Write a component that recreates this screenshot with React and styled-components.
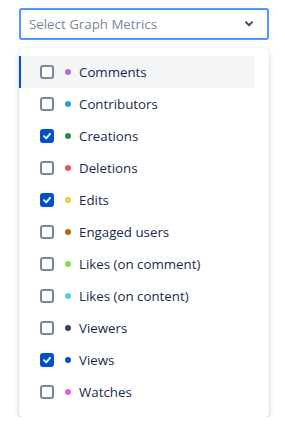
import React, { useState } from "react";
import styled, { createGlobalStyle, css } from "styled-components";

const Global = createGlobalStyle`
  html, body { margin: 0; padding: 0; background: #fff; }
  body { font-family: "Segoe UI", "Open Sans", "Noto Sans", sans-serif; }
  * { box-sizing: border-box; }
`;

const Page = styled.div`
  padding: 8px 16px 0 19px;
  width: 285px;
`;

const Select = styled.div`
  width: 250px;
  height: 32px;
  border: 2px solid #4c9aff;
  border-radius: 3px;
  background: #fff;
  display: flex;
  align-items: center;
  padding: 0 14px 0 8px;
  justify-content: space-between;
`;

const Placeholder = styled.span`
  font-size: 13.3px;
  color: #7a869a;
  line-height: 20px;
`;

const Menu = styled.div`
  margin-top: 8px;
  width: 250px;
  background: #fff;
  border-radius: 4px;
  box-shadow: 0 4px 8px -2px rgba(9, 30, 66, 0.25), 0 0 1px rgba(9, 30, 66, 0.31);
  padding: 8px 15px 9px 0;
`;

const Row = styled.div`
  height: 32px;
  display: flex;
  align-items: center;
  padding-left: 21px;
  position: relative;
  ${(p) =>
    p.$active &&
    css`
      background: #f4f5f7;
      &::before {
        content: "";
        position: absolute;
        left: 0;
        top: 0;
        bottom: 0;
        width: 2px;
        background: #0052cc;
      }
    `}
`;

const Box = styled.span`
  width: 14px;
  height: 14px;
  border-radius: 3px;
  flex: none;
  display: flex;
  align-items: center;
  justify-content: center;
  ${(p) =>
    p.$checked
      ? css`
          background: #0052cc;
        `
      : css`
          border: 2px solid #7a869a;
          background: #fff;
        `}
`;

const Dot = styled.span`
  width: 6px;
  height: 6px;
  border-radius: 50%;
  background: ${(p) => p.$color};
  margin-left: 11px;
  flex: none;
`;

const Label = styled.span`
  margin-left: 8px;
  font-size: 13.3px;
  color: #172b4d;
  line-height: 20px;
  white-space: nowrap;
`;

const Check = () => (
  <svg width="10" height="10" viewBox="0 0 10 10">
    <path d="M2 5.2 L4.2 7.3 L8 2.8" fill="none" stroke="#fff" strokeWidth="1.8" strokeLinecap="round" strokeLinejoin="round" />
  </svg>
);

const Chevron = () => (
  <svg width="8" height="6" viewBox="0 0 8 6">
    <path d="M1 1.2 L4 4.2 L7 1.2" fill="none" stroke="#42526e" strokeWidth="2" strokeLinecap="round" strokeLinejoin="round" />
  </svg>
);

const items = [
  { label: "Comments", color: "#b965e0" },
  { label: "Contributors", color: "#2f9ae6" },
  { label: "Creations", color: "#1e8e4a", checked: true },
  { label: "Deletions", color: "#ea5455" },
  { label: "Edits", color: "#f6c343", checked: true },
  { label: "Engaged users", color: "#b5650b" },
  { label: "Likes (on comment)", color: "#7ee05a" },
  { label: "Likes (on content)", color: "#5bc8f2" },
  { label: "Viewers", color: "#344563" },
  { label: "Views", color: "#0052cc", checked: true },
  { label: "Watches", color: "#e35ef0" },
];

export default function App() {
  const [checked, setChecked] = useState(() => items.map((i) => !!i.checked));
  return (
    <Page>
      <Global />
      <Select>
        <Placeholder>Select Graph Metrics</Placeholder>
        <Chevron />
      </Select>
      <Menu>
        {items.map((it, i) => (
          <Row
            key={it.label}
            $active={i === 0}
            onClick={() => setChecked((c) => c.map((v, j) => (j === i ? !v : v)))}
          >
            <Box $checked={checked[i]}>{checked[i] && <Check />}</Box>
            <Dot $color={it.color} />
            <Label>{it.label}</Label>
          </Row>
        ))}
      </Menu>
    </Page>
  );
}
